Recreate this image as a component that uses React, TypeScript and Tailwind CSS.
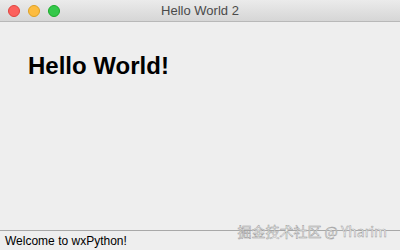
import React from "react";

export default function App() {
  return (
    <div className="w-[400px] h-[250px] flex flex-col bg-[#ececec] overflow-hidden relative" style={{ fontFamily: '"Liberation Sans", Arial, sans-serif' }}>
      <div className="h-[22px] flex items-center relative border-b border-[#b8b8b8] bg-gradient-to-b from-[#ebebeb] to-[#d6d6d6] shrink-0">
        <div className="flex items-center gap-[8px] pl-[8px]">
          <span className="w-[12px] h-[12px] rounded-full bg-[#fc605c] border border-[#e0443e]" />
          <span className="w-[12px] h-[12px] rounded-full bg-[#fdbc40] border border-[#dea123]" />
          <span className="w-[12px] h-[12px] rounded-full bg-[#34c84a] border border-[#1aab29]" />
        </div>
        <div className="absolute inset-0 flex items-center justify-center text-[13px] text-[#4a4a4a]">
          Hello World 2
        </div>
      </div>
      <div className="flex-1 bg-[#eeeeee] pl-[28px] pt-[32px]">
        <div className="text-[24px] font-bold text-black leading-none">Hello World!</div>
      </div>
      <div className="h-[20px] border-t border-[#a8a8a8] bg-[#eeeeee] flex items-center pl-[5px] pt-[1px] text-[12px] text-black shrink-0">
        Welcome to wxPython!
      </div>
      <div
        className="absolute right-[13px] top-[224px] text-[14px] text-white leading-none"
        style={{ fontFamily: '"Noto Sans CJK SC", "Liberation Sans", sans-serif', WebkitTextStroke: "0.5px #999" }}
      >
        掘金技术社区 @ Yharim
      </div>
    </div>
  );
}
